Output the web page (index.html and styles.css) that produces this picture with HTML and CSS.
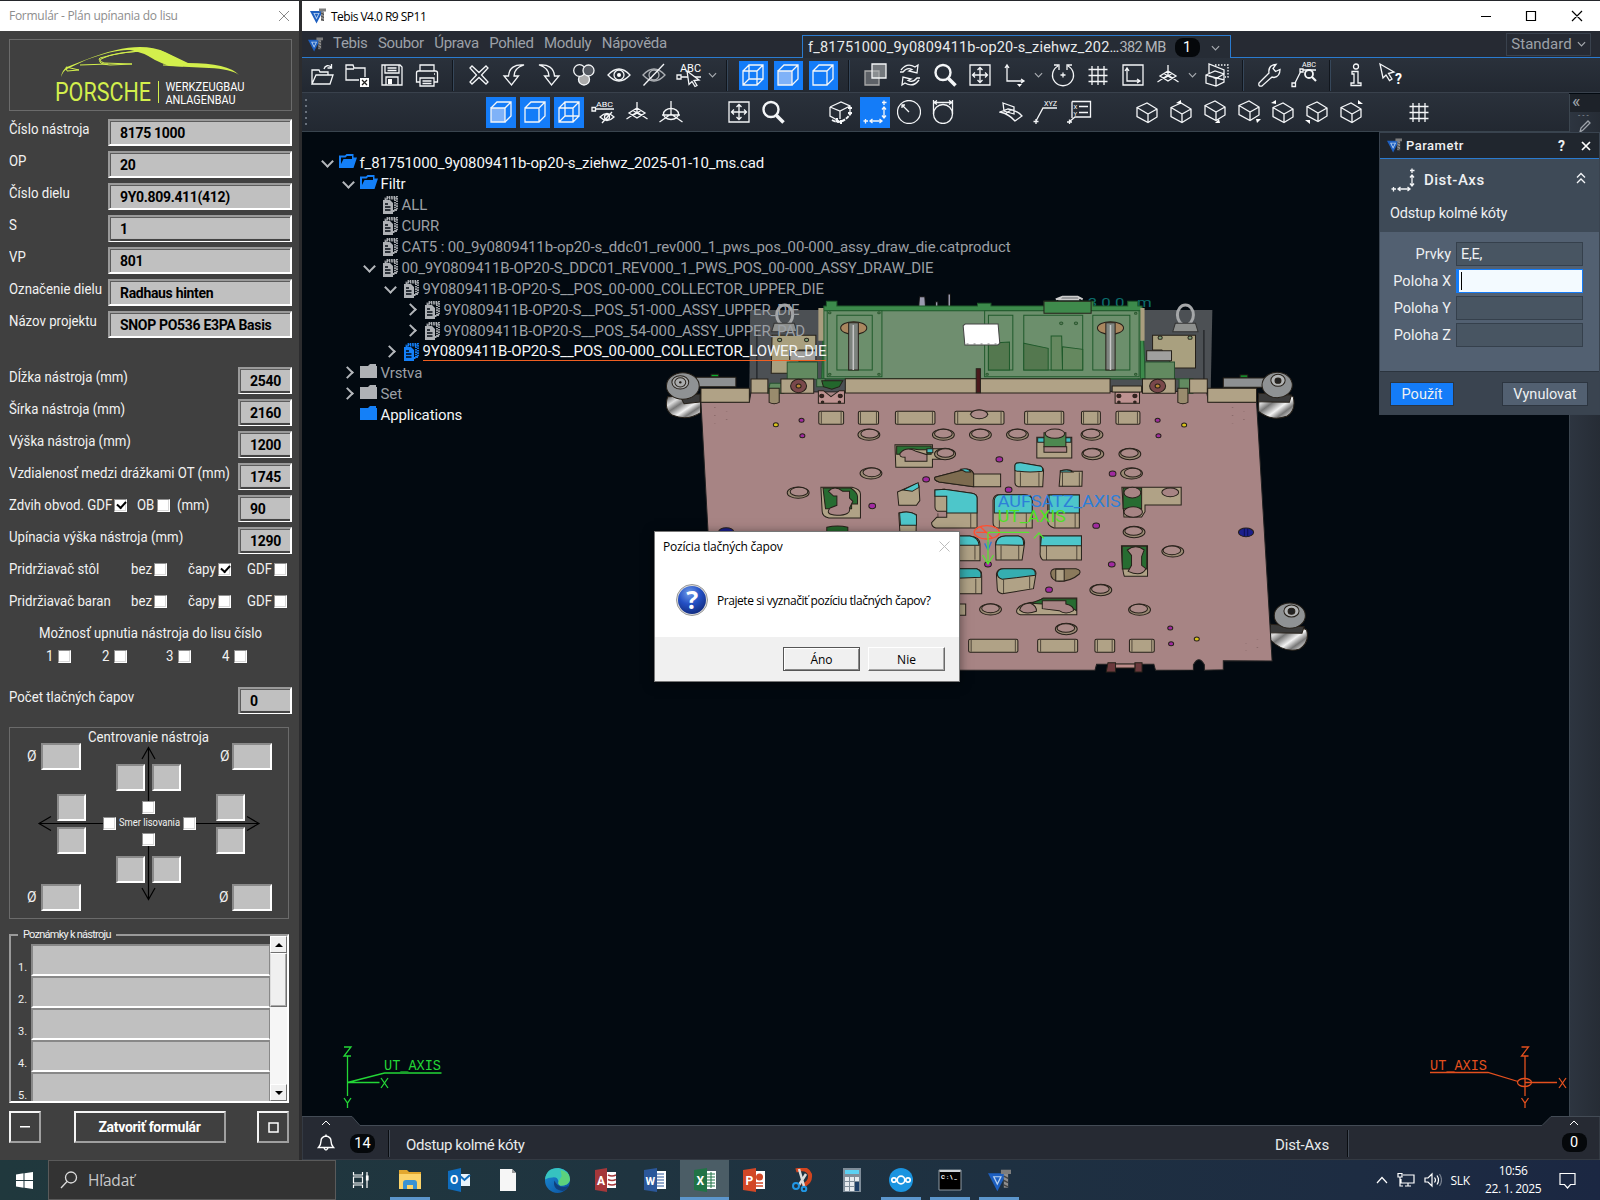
FILE: index.html
```html
<!DOCTYPE html>
<html lang="sk">
<head>
<meta charset="utf-8">
<title>Tebis V4.0 R9 SP11</title>
<link rel="stylesheet" href="styles.css">
</head>
<body>
<svg class="defs" width="0" height="0">
  <defs>
    <linearGradient id="chrome" x1="0" y1="0" x2="1" y2="1"><stop offset="0" stop-color="#444"/><stop offset=".25" stop-color="#ddd"/><stop offset=".4" stop-color="#777"/><stop offset=".6" stop-color="#f2f2f2"/><stop offset=".75" stop-color="#777"/><stop offset=".88" stop-color="#ccc"/><stop offset="1" stop-color="#444"/></linearGradient>
    <linearGradient id="edge" x1="0" y1="0" x2="1" y2="1"><stop offset="0" stop-color="#1b8fd6"/><stop offset="1" stop-color="#0c4f9e"/></linearGradient>
    <radialGradient id="ask" cx=".4" cy=".25" r=".8"><stop offset="0" stop-color="#6f9be8"/><stop offset=".5" stop-color="#2450c4"/><stop offset="1" stop-color="#122b7c"/></radialGradient>
  </defs>
  <symbol id="tebis" viewBox="0 0 16 16"><path d="M0 3h13L6.500 15.500z" fill="#1d5fc0"/><path d="M3.300 5h6.400L6.500 11.500z" fill="#b9d2f0"/><path d="M4.700 5.800h3.600L6.500 9.500z" fill="#1d5fc0"/><path d="M9 .5h7v3H9z" fill="#7d7d7d"/><path d="M11 3.500h3V13h-3z" fill="#8f8f8f"/><path d="M11 5l3 1.500M11 8l3 1.500M11 11l3 1.500" stroke="#444"/></symbol>
  <symbol id="open" viewBox="0 0 24 24"><path d="M2 21V7h7l1 2h8v3M2 21l4-9h17l-3 9zM14 6c1-4 5-4 7-2M21.500 1v4h-4"/></symbol>
  <symbol id="folderx" viewBox="0 0 24 24"><path d="M14 17H1V2h7l1 3h11v9M1 6h8"/><path class="solid" d="M15 15h9v9h-9z"/><path d="M17 17l5 5m0-5l-5 5" stroke="#222"/></symbol>
  <symbol id="save" viewBox="0 0 24 24"><path d="M2 2h18l2 2v18H2zM5 2v8h14V2M7.500 5h9M7.500 7.500h9M6 22v-8h12v8"/><path class="solid" d="M8 16h4v5H8z"/></symbol>
  <symbol id="print" viewBox="0 0 24 24"><path d="M5 8V2h14v6M5 19H1.500V10q0-2 2-2h17q2 0 2 2v9H19M5 15h14v8H5zM7.500 18h9M7.500 20.500h9M19 11h1"/></symbol>
  <symbol id="cross" viewBox="0 0 24 24"><path d="M3 5l2-2 7 6.500L19 3l2 2-6.500 7L21 19l-2 2-7-6.500L5 21l-2-2 6.500-7z"/></symbol>
  <symbol id="undo" viewBox="0 0 24 24"><path d="M22 2C13 1 7 5 6.500 13H2l7.500 9 7-9h-4.500C12 8 15 4 22 2z"/></symbol>
  <symbol id="redo" viewBox="0 0 24 24"><path d="M2 2c9-1 15 3 15.500 11H22l-7.500 9-7-9H12C12 8 9 4 2 2z"/></symbol>
  <symbol id="rgb" viewBox="0 0 24 24"><circle cx="12" cy="16.500" r="5.500" fill="#aaa"/><circle cx="7.500" cy="7.500" r="5.800" fill="#262c35"/><circle cx="16.500" cy="7.500" r="5.500" fill="#555a62"/></symbol>
  <symbol id="eye" viewBox="0 0 24 24"><path d="M1 12Q12 0 23 12Q12 24 1 12z"/><circle cx="12" cy="12" r="5"/><circle class="solid" cx="12" cy="12" r="2"/></symbol>
  <symbol id="eyeoff" viewBox="0 0 24 24"><g opacity=".65"><path d="M1 12Q12 0 23 12Q12 24 1 12z"/><circle cx="12" cy="12" r="5"/></g><path d="M1.500 22.500L22 1"/></symbol>
  <symbol id="wire" viewBox="0 0 24 24"><path d="M2 8h14v14H2zM8 2h14v14H8zM2 8l6-6M16 8l6-6M16 22l6-6M2 22l6-6"/></symbol>
  <symbol id="shade" viewBox="0 0 24 24"><path d="M2 8h14v14H2z" fill="#7fb2f8"/><path d="M2 8l6-6h14v14l-6 6M16 8l6-6"/></symbol>
  <symbol id="hidden" viewBox="0 0 24 24"><path d="M2 8h14v14H2zM2 8l6-6h14v14l-6 6M16 8l6-6"/></symbol>
  <symbol id="overlap" viewBox="0 0 24 24"><path d="M2 8h14v14H2z" fill="#5d6167" stroke="#aaa"/><path d="M9 1h14v14H9z" fill="#a9abae" fill-opacity=".6"/></symbol>
  <symbol id="refresh" viewBox="0 0 24 24"><path d="M3 7q6-8 14-3l3-2-1 8-8-2 3-1.500Q9 4 5 9H2M21 17q-6 8-14 3l-3 2 1-8 8 2-3 1.500q5 2.500 9-2.500h3"/></symbol>
  <symbol id="mag" viewBox="0 0 24 24"><circle cx="10" cy="9.500" r="7.500" stroke-width="2.400"/><path d="M15.500 15.500l7 7" stroke-width="3.500"/></symbol>
  <symbol id="fit" viewBox="0 0 24 24"><path d="M2 2h20v20H2zM12 5v14M5 12h14M9.500 7L12 4.500 14.500 7M9.500 17l2.500 2.500 2.500-2.500M7 9.500L4.500 12 7 14.500M17 9.500l2.500 2.500-2.500 2.500"/></symbol>
  <symbol id="axes" viewBox="0 0 24 24"><path d="M4 3v15h17M2 5l2-3 2 3M18 16l3 2-3 2"/><path class="solid" d="M14 21h5l-2.500 3z"/></symbol>
  <symbol id="rotate" viewBox="0 0 24 24"><path d="M7 3a10.500 10.500 0 1 0 10 0M3 2h5v5M21 2h-5v5M12 9.500v5M9.500 12h5"/></symbol>
  <symbol id="grid" viewBox="0 0 24 24"><path d="M6 3v19M12 3v19M18 3v19M2.500 6.500h19M2.500 12.500h19M2.500 18.500h19"/></symbol>
  <symbol id="axbox" viewBox="0 0 24 24"><path d="M2 2h20v20H2zM6 6v12h13M4 8l2-3 2 3M16 16l3 2-3 2"/></symbol>
  <symbol id="tri" viewBox="0 0 24 24"><path d="M12 2v10M12 12L1.500 19M12 12l10.500 7M12 8l8 5-8 5-8-5zM8 10.500l8 5M16 10.500l-8 5"/></symbol>
  <symbol id="tri2" viewBox="0 0 24 24"><path d="M12 1v13M12 14L.5 22M12 14l11.500 8M3 15h18"/><ellipse cx="12" cy="14" rx="7.500" ry="5.500"/></symbol>
  <symbol id="section" viewBox="0 0 24 24"><path d="M1 12l9-4 9 3v8l-8 4-10-3zM1 12l10 3.500 8-4.500M11 15.500V23M4 10.500V1l15 6v10L4 13"/><path d="M10 2h13v12h-3" stroke-dasharray="1.500 1.500"/></symbol>
  <symbol id="wrench" viewBox="0 0 24 24"><path d="M2 20L12 10q-1-6 4-8l3-.5-3 4 2.500 3 4.500-2q0 7-6 8l-2-.5L5 23q-4 1-3-3z"/></symbol>
  <symbol id="info" viewBox="0 0 24 24"><circle cx="12" cy="3.500" r="2.500"/><path d="M8 8.500h6V20h3v2.500H7V20h3v-9H8z"/></symbol>
  <symbol id="boxdim" viewBox="0 0 24 24"><path d="M1 7l11-5 9 4v8M1 7v9l9 5M1 7l10 4 10-5M11 11v8"/><path d="M3 20q10 6 19-7M19 8h4M19 13h4M12 20v4M8 18v5" stroke-width="2" stroke-dasharray="4 1"/></symbol>
  <symbol id="dist" viewBox="0 0 24 24"><path d="M21 .5v4.500M19 2.500h4.500M21 7v11M19 9.500L21 7l2 2.500M19 15.500l2 2.500 2-2.500M.5 21h4.500M2.500 19v4.500M7 21h12M9.500 19L7 21l2.500 2M16.500 19l2.500 2-2.500 2"/></symbol>
  <symbol id="circ" viewBox="0 0 24 24"><circle cx="12" cy="12" r="11.500"/><path d="M12 12L5 5M8 5H5v3"/></symbol>
  <symbol id="circdim" viewBox="0 0 24 24"><circle cx="12" cy="14" r="9.500"/><path d="M2.500 0v14M21.500 0v14M3 2.500h18M6 .5L3 2.500l3 2M18 .5l3 2-3 2"/></symbol>
  <symbol id="surf" viewBox="0 0 24 24"><path d="M1 12l8-3q9 1 14 7l-7 5Q10 14 1 12zM4 3l11 4v7L5 11zM12 10l-6 4"/></symbol>
  <symbol id="cube" viewBox="0 0 24 24"><path d="M2 7.500l10-4.500 10 6v8l-9 5.500-11-6zM2 7.500l11 6.500 9-5M13 14v8.500"/></symbol>
  <symbol id="chev" viewBox="0 0 10 10"><path d="M1 3l4 4 4-4"/></symbol>
  <symbol id="fopen" viewBox="0 0 18 14"><path d="M0 14V1.500h6L7.500 0h7v3.500H18L14.500 14zM2 10l2.500-5H13V2H8L6.500 3.500H2z"/></symbol>
  <symbol id="fclosed" viewBox="0 0 18 14"><path d="M0 2h8l2-2h6v2h1v12H0z"/></symbol>
  <symbol id="docs" viewBox="0 0 16 18"><path d="M5.500 2V.8H15V14h-2M3.500 4V2.500H13V15h-2" fill="none" stroke="currentColor" stroke-dasharray="1.600 .8" stroke-width="1.800"/><path d="M1 4h7l3 3v11H1z"/><path d="M3 8h3M3 11h5.500M3 14h5.500" stroke="#020910" stroke-width="1.300"/></symbol>
</svg>

<div class="desktop">
  <div class="windows">
    <aside class="form">
      <header class="form-title"><span>Formulár - Plán upínania do lisu</span><svg width="12" height="12" viewBox="0 0 12 12"><path d="M1 1l10 10M11 1L1 11"/></svg></header>
      <div class="form-body">
        <div class="logo">
          <svg width="281" height="69" viewBox="10 40 281 69">
            <path d="M61 77q1-7 6-10l18-7q33-13 55-13 14 0 25 5l23 11q40 0 51 12-8-6-30-7l-40-2q-8-3-14-6-12-8-25-10-15-1-44 10l-19 9q-4 2-6 8z" fill="#d3ef4c"/>
            <path d="M160 50l26 13-8 1-18-10z" fill="#d3ef4c"/>
            <path d="M153 51q-25-1-53 7-3 2 4 5l28 1-22 1q-14-1-9-6 14-8 52-8zM80 65l28-1M66 67l13 3-12 1zM163 60q6-2 10 3M163 65l20 1" fill="none" stroke="#d3ef4c"/>
            <text x="55" y="101" class="brand" textLength="96" lengthAdjust="spacingAndGlyphs">PORSCHE</text>
            <path d="M158.500 81v22" stroke="#d3ef4c"/>
            <text x="165.500" y="91" class="sub" textLength="79" lengthAdjust="spacingAndGlyphs">WERKZEUGBAU</text>
            <text x="165.500" y="104" class="sub" textLength="70" lengthAdjust="spacingAndGlyphs">ANLAGENBAU</text>
          </svg>
        </div>
        <div class="rows ident">
          <label class="row"><span class="lb">Číslo nástroja</span><span class="field">8175 1000</span></label>
          <label class="row"><span class="lb">OP</span><span class="field">20</span></label>
          <label class="row"><span class="lb">Číslo dielu</span><span class="field">9Y0.809.411(412)</span></label>
          <label class="row"><span class="lb">S</span><span class="field line">1</span></label>
          <label class="row"><span class="lb">VP</span><span class="field">801</span></label>
          <label class="row"><span class="lb">Označenie dielu</span><span class="field">Radhaus hinten</span></label>
          <label class="row"><span class="lb">Názov projektu</span><span class="field">SNOP PO536 E3PA Basis</span></label>
        </div>
        <div class="rows dims">
          <label class="row"><span class="lb">Dĺžka nástroja (mm)</span><span class="field line">2540</span></label>
          <label class="row"><span class="lb">Šírka nástroja (mm)</span><span class="field line">2160</span></label>
          <label class="row"><span class="lb">Výška nástroja (mm)</span><span class="field line">1200</span></label>
          <label class="row"><span class="lb">Vzdialenosť medzi drážkami OT (mm)</span><span class="field line">1745</span></label>
          <div class="row"><span class="stroke-grid"><span class="lb">Zdvih obvod. GDF</span><i class="ck on"></i><span class="lb">OB</span><i class="ck"></i><span class="lb">(mm)</span></span><span class="field line">90</span></div>
          <label class="row"><span class="lb">Upínacia výška nástroja (mm)</span><span class="field line">1290</span></label>
          <div class="hold"><span class="lb">Pridržiavač stôl</span><span class="lb">bez</span><i class="ck"></i><span class="lb">čapy</span><i class="ck on"></i><span class="lb">GDF</span><i class="ck"></i></div>
          <div class="hold"><span class="lb">Pridržiavač baran</span><span class="lb">bez</span><i class="ck"></i><span class="lb">čapy</span><i class="ck"></i><span class="lb">GDF</span><i class="ck"></i></div>
        </div>
        <div class="press">
          <span class="lb">Možnosť upnutia nástroja do lisu číslo</span>
          <div class="press-opts"><span class="lb">1</span><i class="ck"></i><span class="lb">2</span><i class="ck"></i><span class="lb">3</span><i class="ck"></i><span class="lb">4</span><i class="ck"></i></div>
        </div>
        <div class="rows dims pins"><label class="row"><span class="lb">Počet tlačných čapov</span><span class="field line">0</span></label></div>
        <div class="center-box">
          <svg width="278" height="190" viewBox="10 728 278 190">
            <g class="arrows"><path d="M148.500 748v56M142 759l6.500-11.500L155 759M148.500 842v57M142 888l6.500 11.500L155 888M40 823.500h66M51 816.500l-12 7 12 7M192 823.500h66M247 816.500l12 7-12 7"/></g>
            <g class="lbt"><text x="88" y="741.500" font-size="15" textLength="121" lengthAdjust="spacingAndGlyphs">Centrovanie nástroja</text>
            <text x="27" y="761" textLength="9.500" lengthAdjust="spacingAndGlyphs">Ø</text><text x="220" y="761" textLength="9.500" lengthAdjust="spacingAndGlyphs">Ø</text><text x="27" y="902" textLength="9.500" lengthAdjust="spacingAndGlyphs">Ø</text><text x="219" y="902" textLength="9.500" lengthAdjust="spacingAndGlyphs">Ø</text>
            <text x="119" y="826" class="tiny" textLength="61" lengthAdjust="spacingAndGlyphs">Smer lisovania</text></g>
          </svg>
          <i class="nb w" style="left:31px;top:15px"></i><i class="nb w" style="left:222px;top:15px"></i><i class="nb w" style="left:31px;top:156px"></i><i class="nb w" style="left:222px;top:156px"></i>
          <i class="nb" style="left:106px;top:36px"></i><i class="nb" style="left:142px;top:36px"></i><i class="nb" style="left:106px;top:128px"></i><i class="nb" style="left:142px;top:128px"></i>
          <i class="nb" style="left:47px;top:66px"></i><i class="nb" style="left:47px;top:99px"></i><i class="nb" style="left:206px;top:66px"></i><i class="nb" style="left:206px;top:99px"></i>
          <i class="ck" style="left:132px;top:73px"></i><i class="ck" style="left:132px;top:105px"></i><i class="ck" style="left:93px;top:89px"></i><i class="ck" style="left:173px;top:89px"></i>
        </div>
        <div class="notes">
          <span class="legend">Poznámky k nástroju</span>
          <div class="note-list">
            <div class="note"><b>1.</b><i></i></div><div class="note"><b>2.</b><i></i></div><div class="note"><b>3.</b><i></i></div><div class="note"><b>4.</b><i></i></div><div class="note"><b>5.</b><i></i></div>
          </div>
          <div class="sb"><div class="sb-btn"><svg width="8" height="4"><path d="M0 4l4-4 4 4z"/></svg></div><div class="sb-thumb"></div><div class="sb-space"></div><div class="sb-btn"><svg width="8" height="4"><path d="M0 0l4 4 4-4z"/></svg></div></div>
        </div>
        <div class="form-foot"><button class="sq"><svg width="10" height="2"><path d="M0 0h10v1.500H0z" fill="#fff"/></svg></button><button class="close-form">Zatvoriť formulár</button><button class="sq"><svg width="11" height="11"><path d="M1 1h9v9H1z" fill="none" stroke="#fff" stroke-width="1.500"/></svg></button></div>
      </div>
    </aside>

    <main class="app">
      <header class="app-title"><svg width="16" height="16"><use href="#tebis"/></svg><span>Tebis V4.0 R9 SP11</span>
        <svg class="winbtns" width="104" height="12" viewBox="0 0 104 12"><path d="M0 6.500h10M45.500 1.500h9v9h-9zM91 1l10 10M101 1L91 11"/></svg></header>
      <nav class="menubar">
        <svg class="mlogo" width="15" height="15"><use href="#tebis"/></svg>
        <div class="menus"><span>Tebis</span><span>Soubor</span><span>Úprava</span><span>Pohled</span><span>Moduly</span><span>Nápověda</span></div>
        <div class="tab"><span class="tabname">f_81751000_9y0809411b-op20-s_ziehwz_202…</span><span class="mb">382 MB</span><span class="badge">1</span><svg class="ic small" width="10" height="10"><use href="#chev"/></svg></div>
        <div class="layout-sel"><span>Standard</span><svg class="ic small" width="10" height="10"><use href="#chev"/></svg></div>
      </nav>
      <div class="tools t1">
        <span><svg class="ic"><use href="#open"/></svg></span><span><svg class="ic"><use href="#folderx"/></svg></span><span><svg class="ic"><use href="#save"/></svg></span><span><svg class="ic"><use href="#print"/></svg></span><hr>
        <span><svg class="ic"><use href="#cross"/></svg></span><span><svg class="ic"><use href="#undo"/></svg></span><span><svg class="ic"><use href="#redo"/></svg></span><span><svg class="ic"><use href="#rgb"/></svg></span><span><svg class="ic"><use href="#eye"/></svg></span><span><svg class="ic"><use href="#eyeoff"/></svg></span>
        <span><svg class="ic" viewBox="0 0 24 24"><text x="3" y="9" font-size="10" textLength="21" lengthAdjust="spacingAndGlyphs">ABC</text><path d="M0 12h4v4H0zM4 14h20"/><path d="M10 8l12 9-5 .5 3 5-2 1-3-5-3 3z" fill="#262c35"/></svg></span><em><svg class="ic small"><use href="#chev"/></svg></em><hr>
        <span class="on"><svg class="ic"><use href="#wire"/></svg></span><span class="on"><svg class="ic"><use href="#shade"/></svg></span><span class="on"><svg class="ic"><use href="#hidden"/></svg></span><hr>
        <span><svg class="ic"><use href="#overlap"/></svg></span><span><svg class="ic"><use href="#refresh"/></svg></span><span><svg class="ic"><use href="#mag"/></svg></span><span><svg class="ic"><use href="#fit"/></svg></span><span><svg class="ic"><use href="#axes"/></svg></span><em><svg class="ic small"><use href="#chev"/></svg></em>
        <span><svg class="ic"><use href="#rotate"/></svg></span><span><svg class="ic"><use href="#grid"/></svg></span><span><svg class="ic"><use href="#axbox"/></svg></span><span><svg class="ic"><use href="#tri"/></svg></span><em class="wide"><svg class="ic small"><use href="#chev"/></svg></em><span><svg class="ic"><use href="#section"/></svg></span><hr>
        <span><svg class="ic"><use href="#wrench"/></svg></span>
        <span><svg class="ic" viewBox="0 0 24 24"><text x="10" y="4" font-size="7" textLength="14" lengthAdjust="spacingAndGlyphs">ABC</text><path d="M0 20h3.500v3.500H0zM3 20L9 8M8 6h3v3H8zM11 7h13"/><circle cx="17" cy="11" r="4" stroke-width="1.800"/><path d="M20 14l4 4" stroke-width="2.200"/></svg></span><hr>
        <span><svg class="ic"><use href="#info"/></svg></span>
        <span><svg class="ic" viewBox="0 0 24 24"><path d="M1 1l14 8-5.500 1.500L13 16l-2.500 1.500L7 12l-3 3z"/><text x="16" y="21" font-size="14" font-weight="700">?</text></svg></span>
      </div>
      <div class="tools t2">
        <b class="grip"></b>
        <span class="on"><svg class="ic"><use href="#shade"/></svg></span><span class="on"><svg class="ic"><use href="#hidden"/></svg></span><span class="on"><svg class="ic"><use href="#wire"/></svg></span>
        <span><svg class="ic" viewBox="0 0 24 24"><text x="5" y="6.500" font-size="8" textLength="17" lengthAdjust="spacingAndGlyphs">ABC</text><path d="M1 7.500h3.500V11H1zM4.500 9H23"/><path d="M9 17q7-7 14 0-7 7-14 0zM11 23L21 12"/><circle cx="16" cy="17" r="2.500"/></svg></span>
        <span><svg class="ic"><use href="#tri"/></svg></span><span><svg class="ic"><use href="#tri2"/></svg></span><span></span>
        <span><svg class="ic"><use href="#fit"/></svg></span><span><svg class="ic"><use href="#mag"/></svg></span><span></span>
        <span><svg class="ic"><use href="#boxdim"/></svg></span><span class="on"><svg class="ic"><use href="#dist"/></svg></span><span><svg class="ic"><use href="#circ"/></svg></span><span><svg class="ic"><use href="#circdim"/></svg></span><span></span>
        <span><svg class="ic"><use href="#surf"/></svg></span>
        <span><svg class="ic" viewBox="0 0 24 24"><text x="11" y="5.500" font-size="7" textLength="13" lengthAdjust="spacingAndGlyphs">XYZ</text><path d="M24 8H10L3 21M.5 21.500h5M3 19v5"/></svg></span>
        <span><svg class="ic" viewBox="0 0 24 24"><path d="M5 1.500h18.500V17H8l-6 5M0 22h5M2.500 19.500v4.500M5 1.500V18M12 6.500h9M12 12.500h9"/><text x="6.500" y="8.500" font-size="6">X</text><text x="6.500" y="15.500" font-size="6">Y</text></svg></span><span></span>
        <span><svg class="ic" viewBox="0 0 24 24"><use href="#cube"/></svg></span>
        <span><svg class="ic" viewBox="0 0 24 24"><use href="#cube"/><path class="solid" d="M7 3l5-3v4z"/></svg></span>
        <span><svg class="ic" viewBox="0 0 24 24"><use href="#cube" y="-2"/><path class="solid" d="M12 23l4-4 1 4z"/></svg></span>
        <span><svg class="ic" viewBox="0 0 24 24"><use href="#cube" y="-2"/><path class="solid" d="M19 19h5l-4 4z"/></svg></span>
        <span><svg class="ic" viewBox="0 0 24 24"><use href="#cube"/><path class="solid" d="M0 3l5-3v4z"/></svg></span>
        <span><svg class="ic" viewBox="0 0 24 24"><use href="#cube" y="-1"/><path class="solid" d="M0 20h5v4z"/></svg></span>
        <span><svg class="ic" viewBox="0 0 24 24"><use href="#cube"/><path class="solid" d="M19 0l5 4h-5z"/></svg></span><span></span>
        <span><svg class="ic"><use href="#grid"/></svg></span>
      </div>
      <div class="work">
        <section class="viewport">
          <svg class="scene" width="1267" height="995" viewBox="302 132 1267 995">
            <svg x="650" y="280" width="660" height="400" viewBox="0 0 1568 1200" preserveAspectRatio="none" class="model">
              <text x="1040" y="82" fill="#0c6d6b" font-size="40" textLength="152" lengthAdjust="spacing">300 m</text>
              <!-- glass press frame -->
              <path d="M238 90H1336L1332 340H236z" fill="#4c5054" stroke="none"/>
              <path d="M254 150V300M1316 150V300" stroke="#15181b"/>
              <g stroke="#111"><path d="M638 90l2-40h13l2 40zM678 80V65h6v15M708 80V42h6v38" fill="#9a9aae"/></g>
              <g fill="none" stroke="#a5a7a9" stroke-width="3"><ellipse cx="320" cy="105" rx="19" ry="30"/><ellipse cx="1272" cy="105" rx="19" ry="30"/></g>
              <path d="M295 130h48l6 25h-60zM1248 130h48l6 25h-60z" fill="#8d8f8d" stroke="#333"/>
              <!-- swivel rings -->
              <path d="M42 350q-10 40 12 56 34 18 66-8V345z" fill="url(#chrome)"/><path d="M70 345l49-3v24l-38 5z" fill="#3a3a3a"/><path d="M110 292h94v28h-94z" fill="#8d9092"/><ellipse cx="78" cy="318" rx="39" ry="40" fill="#8f9294"/><ellipse cx="72" cy="307" rx="20" ry="20" fill="#a9abac"/><ellipse cx="72" cy="307" rx="13" ry="14" fill="none"/><circle cx="72" cy="307" r="2"/><path d="M145 290v-7h18v7z" fill="#0cab30"/>
              <path d="M1362 294h98v28h-98z" fill="#8d9092"/><path d="M1446 350q30-30 82 0 8 40-14 58-36 18-68-14z" fill="url(#chrome)"/><path d="M1446 340l78 5-5 22-74-2z" fill="#3a3a3a"/><ellipse cx="1490" cy="315" rx="36" ry="38" fill="#8f9294"/><ellipse cx="1492" cy="301" rx="17" ry="18" fill="#b1b3b4"/><ellipse cx="1492" cy="302" rx="7" ry="8" fill="#222"/><path d="M1402 292v-7h18v7z" fill="#0cab30"/>
              <path d="M1474 1045q40-30 86 5 8 38-18 58-36 12-68-28z" fill="url(#chrome)"/><path d="M1474 1033l80 7-5 20-75-2z" fill="#3a3a3a"/><ellipse cx="1520" cy="1007" rx="37" ry="38" fill="#8f9294"/><ellipse cx="1524" cy="993" rx="18" ry="18" fill="#b1b3b4"/><ellipse cx="1524" cy="994" rx="8" ry="9" fill="#222"/>
              <!-- lower plate -->
              <path d="M121 367l115-1 4-30 1082-2 5 32 114 1 37 776-116-1v27l-45 2v-17q-13-30-26 0v16l-90 1-4-18h-136l-4 18H156z" fill="#a78484" stroke="#222"/>
              <path d="M1088 1148h18v28h-22zM1152 1148h17v28h-17z" fill="#6b393c"/><path d="M1106 1152h46v12h-46z" fill="#bd8d8b"/>
              <!-- upper structure -->
              <g stroke="#1f5a2b"><path d="M413 78h6V64h25v14h334v-8h32v8h126V64h117v14h82V64h24v14h10l8 218H408z" fill="#3c8a4b"/>
              <path d="M413 92h752v204H413z" fill="#6f8e6f"/>
              <path d="M421 92h130v198H421zM444 106h84v164h-84zM795 92h367v198H795zM804 106h58v164h-58zM888 106h140v164H888zM1052 106h88v164h-88z" fill="#6c8f6c"/>
              <path d="M888 190l58 15v65h-58zM804 190l50-4v84h-50z" fill="#54784f"/><path d="M953 168h25l2 102h-27zM980 200l48 8v62h-48z" fill="#65885f"/></g>
              <g fill="#5b7a5b" stroke="#2c5a30"><circle cx="977" cy="130" r="4"/><circle cx="1012" cy="130" r="4"/><circle cx="427" cy="98" r="3"/><circle cx="544" cy="98" r="3"/><circle cx="427" cy="283" r="3"/><circle cx="544" cy="283" r="3"/><circle cx="801" cy="283" r="3"/><circle cx="1154" cy="283" r="3"/><circle cx="1154" cy="100" r="3"/></g>
              <path d="M400 84h12v98h-12zM1165 84h10v98h-10z" fill="#a99d7e" stroke="none"/>
              <path d="M936 64h112v36H936z" fill="#3f8a4c"/><path d="M964 58l16-8h36l12 8M970 58h50" stroke="#ccc" fill="none" stroke-width="2"/>
              <g fill="#a9875f"><ellipse cx="484" cy="144" rx="31" ry="19"/><ellipse cx="1094" cy="144" rx="31" ry="19"/></g><path d="M472 128h23v142h-23zM1083 128h22v142h-22z" fill="#7d837e"/><path d="M483 135v135M1094 135v135" stroke="#c7c7c7" stroke-width="1.500"/>
              <path d="M744 137l5-5h78l4 58-5 5h-78z" fill="#fff" stroke="#444"/><path d="M752 192h72" stroke="#777" stroke-dasharray="2 5" fill="none"/>
              <path d="M290 166h104v44h-40v70h-66zM1194 166h102v98h-50l-30-54h-22z" fill="#a9a07f"/><g fill="#7fa07a"><circle cx="308" cy="180" r="5"/><circle cx="372" cy="180" r="5"/><circle cx="1212" cy="173" r="5"/><circle cx="1283" cy="173" r="5"/></g>
              <path d="M332 212h62v30h-62zM1180 212h59v30h-59z" fill="#a0a09e"/><path d="M326 246h72v50h18v24h-20v-22h-78v42h-38l5-30h41zM1176 246h70v50h44v44h-33v-42h-97v-2h16z" fill="#628a60" stroke="#275030"/>
              <path d="M240 297h40v42h-40zM311 297h78v43h-78zM464 296h629v43H464zM1170 297h78v43h-78zM1282 297h42v42h-42zM121 325h115v42H121zM1325 325h116v42h-116z" fill="#b0a286"/>
              <path d="M283 325h24v42q-12 8-24 0zM1254 325h24v42q-12 8-24 0z" fill="#998b6d"/>
              <path d="M775 266h10v72h-10z" fill="#4b191c"/>
              <g fill="#79484b"><ellipse cx="353" cy="318" rx="19" ry="20"/><ellipse cx="1206" cy="318" rx="19" ry="20"/></g><g fill="#b88735"><circle cx="353" cy="318" r="6"/><circle cx="1206" cy="318" r="6"/></g>
              <path d="M408 302h50l-8 18-18 8-20-8z" fill="#23672c"/><path d="M400 332h12l18 18 20-18h12v38h-62zM1105 336h58v34h-58z" fill="#be9291"/><path d="M1098 318h70v18h-70z" fill="#b0a286"/><g fill="#3b2020"><circle cx="408" cy="348" r="5"/><circle cx="452" cy="348" r="5"/><circle cx="410" cy="366" r="3"/><circle cx="450" cy="366" r="3"/><circle cx="1114" cy="348" r="5"/><circle cx="1152" cy="348" r="5"/><circle cx="1114" cy="366" r="3"/><circle cx="1152" cy="366" r="3"/></g>
              <!-- rectangular slots -->
              <g fill="#b0a286"><rect x="401" y="394" width="59" height="39" rx="4"/><rect x="495" y="394" width="48" height="39" rx="4"/><rect x="583" y="394" width="94" height="39" rx="4"/><rect x="724" y="394" width="117" height="39" rx="4"/><rect x="890" y="394" width="93" height="39" rx="4"/><rect x="1025" y="394" width="45" height="39" rx="4"/><rect x="1107" y="394" width="57" height="39" rx="4"/><rect x="757" y="1078" width="117" height="39" rx="4"/><rect x="921" y="1078" width="95" height="39" rx="4"/><rect x="1057" y="1078" width="47" height="39" rx="4"/><rect x="1139" y="1078" width="59" height="39" rx="4"/></g>
              <path d="M407 396v35M454 396v35M500 396v35M538 396v35M589 396v35M671 396v35M731 396v35M834 396v35M897 396v35M977 396v35M1030 396v35M1064 396v35M1113 396v35M1158 396v35M763 1080v35M868 1080v35M928 1080v35M1009 1080v35M1063 1080v35M1098 1080v35M1145 1080v35M1192 1080v35" stroke-width=".7"/>
              <path d="M762 402q20-24 40 0z" fill="#4d8850"/>
              <!-- irregular pockets -->
              <path d="M582 494h89v12h25v32h-25v24h-87z" fill="#b0a286"/><path d="M586 498h82v25h-10v-14h-20l-16-3-20 5-8 12h-8z" fill="#2a7134"/><path d="M594 520q15-22 38-6l26 10v20h-52v-12q-15 0-12-12z" fill="#a78484"/><path d="M658 506h14v12h-14z" fill="#3fbcc0"/>
              <path d="M919 472h83v62h-83z" fill="#b0a286"/><path d="M921 473h79v14h-79z" fill="#3fbcc0"/><path d="M936 458h52v42h-52z" fill="#4d8850"/><path d="M936 500h54v17h-54z" fill="#a78484"/>
              <path d="M677 592l66-22q20-8 26 12h64v38h-66l-80-14q-14-6-10-14z" fill="#b0a286"/><path d="M677 592l66-22q20-8 26 12v38l-82-14q-14-6-10-14z" fill="#7d6b4f"/><path d="M738 568q18-6 24 8h-12z" fill="#3fbcc0"/>
              <path d="M867 575v-18q0-10 14-9l48 11q6 5 6 12l-2 49h-58q-8-3-8-12z" fill="#b0a286"/><path d="M867 570v-13q0-10 14-9l48 11q6 5 3 15-30 4-55 0-10 0-10-4z" fill="#4dc6ca"/><path d="M880 577v42M924 577v42" stroke-width=".7"/>
              <path d="M975 572q22-6 30 2h22l-1 45h-54z" fill="#b0a286"/><path d="M975 572q22-6 30 4h-30z" fill="#4dc6ca"/><path d="M980 577v42M1020 577v42" stroke-width=".7"/>
              <path d="M588 636l43-24q8-2 8 6l2 44-8 14h-42z" fill="#b0a286"/><path d="M601 630l36-22 2 14-16 12z" fill="#4dc6ca"/>
              <path d="M677 630l22-2 66 12q12 3 12 14v90h-98q-10-4-10-16l12-16h24v-18h-22q-6-4-6-14z" fill="#b0a286"/><path d="M677 630l22-2 66 12q12 3 12 14v45h-72v-50h-28z" fill="#4dc6ca"/><path d="M762 700v43M684 700v14" stroke-width=".7"/>
              <path d="M815 660q2-16 14-16h60q20 0 19 18v82h-83q-10-4-10-16z" fill="#b0a286"/><path d="M818 660q2-16 14-16h56q20 0 20 18v37h-90z" fill="#4dc6ca"/><path d="M830 700v43M894 700v43" stroke-width=".7"/>
              <path d="M945 645h75v99h-60q-15-6-15-20z" fill="#b0a286"/><path d="M948 645h72v54h-72z" fill="#4dc6ca"/><path d="M962 700v43M1010 700v43" stroke-width=".7"/>
              <path d="M591 699q24-8 42 5l-1 60h-38z" fill="#b0a286"/><path d="M593 699q24-8 40 7v30h-38z" fill="#4dc6ca"/>
              <path d="M700 768h60q24 4 24 24v50h-84z" fill="#b0a286"/><path d="M700 768h60q20 4 22 28h-82z" fill="#4dc6ca"/><path d="M821 794q2-26 24-26h30q15 4 15 20l-6 52h-62z" fill="#b0a286"/><path d="M821 794q2-26 24-26h30q15 4 12 28z" fill="#4dc6ca"/><path d="M834 797v42M876 797v42M772 797v42" stroke-width=".7"/><path d="M927 768h98v72h-92q-8-10-6-24z" fill="#b0a286"/><path d="M930 768h95v29h-97z" fill="#4dc6ca"/><path d="M942 798v42M1014 798v42" stroke-width=".7"/>
              <path d="M700 866h76q14 6 12 22v53h-88z" fill="#b0a286"/><path d="M700 866h76q14 6 10 26l-86 4z" fill="#35aeb1"/><path d="M823 882q2-16 16-16h64q14 0 14 14l-6 46-74 15q-12-2-12-16z" fill="#b0a286"/><path d="M825 880q2-14 16-14h64q12 2 10 20l-78 12q-12-4-12-18z" fill="#35aeb1"/><path d="M840 899v40M902 890v36M774 896v44" stroke-width=".7"/>
              <path d="M952 880q0-14 14-14h46q14 4 8 16-20 22-48 22-20-2-20-24z" fill="#8b7a5c"/><path d="M964 868h20v35h-20z" fill="#b0a286"/>
              <path d="M406 622h74q20 6 20 20v72h-75q-16-4-16-20z" fill="#b0a286"/><path d="M411 624h66q16 14 16 26v22h-14v14h-62z" fill="#276c31"/><path d="M424 634q14-20 34 0h16v20l8 10-8 20q4 22-30 22-30-2-16-22l16-8v-28h-8z" fill="#a78484"/>
              <path d="M1121 622h141v53h-86v20l-8 16h-42z" fill="#b0a286"/><path d="M1124 624h44v62h-44z" fill="#276c31"/><ellipse cx="1146" cy="638" rx="20" ry="16" fill="#a78484"/><ellipse cx="1148" cy="696" rx="22" ry="16" fill="#a78484"/><ellipse cx="1236" cy="637" rx="20" ry="13" fill="#a78484"/>
              <path d="M1120 797h62v92h-55q-6-20-7-92z" fill="#b0a286"/><path d="M1122 799h58v68h-58z" fill="#276c31"/><path d="M1134 810q20-20 40 0l-6 20v26l10 10q-10 26-42 8l8-18v-30z" fill="#a78484"/>
              <path d="M872 988q10-22 48-22l14-12h80v50H880q-12-4-8-16z" fill="#b0a286"/><path d="M905 970l28-14h80v36l-26-20h-54z" fill="#276c31"/><path d="M878 990q6-22 26-20 15 8 14 24-26 12-40-4zM932 962h56v10q20 6 18 20-18 14-34 0l-40-6z" fill="#a78484"/><path d="M420 756v-14q26-8 50 0v14z" fill="#23672c"/><path d="M730 972h20v34h-20z" fill="#b0a286"/>
              <!-- lightening holes -->
              <g class="hole"><ellipse cx="520" cy="464" rx="26" ry="17"/><ellipse cx="697" cy="464" rx="26" ry="17"/><ellipse cx="785" cy="464" rx="26" ry="17"/><ellipse cx="873" cy="464" rx="26" ry="17"/><ellipse cx="1050" cy="464" rx="26" ry="17"/><ellipse cx="701" cy="522" rx="25" ry="17"/><ellipse cx="1052" cy="522" rx="26" ry="17"/><ellipse cx="1140" cy="522" rx="26" ry="17"/><ellipse cx="525" cy="580" rx="26" ry="17"/><ellipse cx="1144" cy="580" rx="26" ry="17"/><ellipse cx="352" cy="638" rx="26" ry="17"/><ellipse cx="1150" cy="756" rx="26" ry="17"/><ellipse cx="1242" cy="814" rx="26" ry="17"/><ellipse cx="1071" cy="930" rx="26" ry="17"/><ellipse cx="809" cy="988" rx="26" ry="17"/><ellipse cx="1163" cy="989" rx="26" ry="17"/><ellipse cx="989" cy="1047" rx="26" ry="17"/></g>
              <g class="hole in"><ellipse cx="522" cy="461" rx="21" ry="13"/><ellipse cx="697" cy="461" rx="21" ry="13"/><ellipse cx="785" cy="461" rx="21" ry="13"/><ellipse cx="873" cy="461" rx="21" ry="13"/><ellipse cx="1048" cy="461" rx="21" ry="13"/><ellipse cx="702" cy="519" rx="20" ry="13"/><ellipse cx="1050" cy="519" rx="21" ry="13"/><ellipse cx="1139" cy="519" rx="21" ry="13"/><ellipse cx="527" cy="577" rx="21" ry="13"/><ellipse cx="1147" cy="578" rx="20" ry="13"/><ellipse cx="354" cy="635" rx="21" ry="13"/><ellipse cx="1149" cy="753" rx="21" ry="13"/><ellipse cx="1240" cy="811" rx="21" ry="13"/><ellipse cx="1070" cy="927" rx="21" ry="13"/><ellipse cx="809" cy="985" rx="21" ry="13"/><ellipse cx="1161" cy="986" rx="21" ry="13"/><ellipse cx="988" cy="1044" rx="21" ry="13"/><ellipse cx="782" cy="403" rx="20" ry="13"/><ellipse cx="962" cy="461" rx="23" ry="14"/></g>
              <g fill="#a02aa0"><circle cx="360" cy="421" r="6"/><circle cx="362" cy="467" r="6"/><circle cx="830" cy="538" r="8"/><circle cx="656" cy="598" r="8"/><circle cx="852" cy="629" r="8"/><circle cx="528" cy="678" r="8"/><circle cx="1099" cy="581" r="8"/><circle cx="1060" cy="737" r="8"/><circle cx="1097" cy="853" r="8"/><circle cx="948" cy="929" r="8"/><circle cx="803" cy="853" r="8"/><circle cx="1206" cy="421" r="6"/><circle cx="1208" cy="467" r="6"/><circle cx="1236" cy="1044" r="6"/><circle cx="1238" cy="1091" r="6"/></g>
              <g fill="#d8c21a"><circle cx="299" cy="434" r="6"/><circle cx="1269" cy="435" r="6"/><circle cx="1299" cy="1077" r="6"/></g>
              <g fill="#1b1f8c"><ellipse cx="181" cy="756" rx="18" ry="13"/><ellipse cx="1416" cy="757" rx="18" ry="13"/></g><path d="M1412 745v24M1420 745v24" stroke="#0c0f55"/>
              <path d="M154 382v1M182 393v1M154 406v1M182 418v1M154 431v1M1384 382v1M1411 393v1M1384 406v1M1411 418v1M1384 431v1M1416 1089v1M1443 1077v1M1416 1112v1M1443 1102v1" stroke="#6f5252" stroke-width="1.500"/>
              <!-- axis markers -->
              <g fill="none" stroke-width="1.300"><ellipse cx="800" cy="757" rx="30" ry="20" stroke="#ff5030"/><path d="M775 757h50M785 740l28 34" stroke="#ff5030"/><path d="M803 785v25l-8-20M803 810l8-25" stroke="#2d7ad6"/><path d="M803 757h98M803 757v95M790 825l13 27 13-27M912 775l12-16 12 16" stroke="#58e430"/></g>
              <g stroke="none" font-size="50"><text x="826" y="680" fill="#2d7fd8" textLength="292" lengthAdjust="spacingAndGlyphs">AUFSATZ_AXIS</text><text x="826" y="725" fill="#4fe025" textLength="162" lengthAdjust="spacingAndGlyphs">UT_AXIS</text></g>
            </svg>
            <g class="tri-g"><path d="M347.500 1056v40M347.500 1082.500h32M347.500 1082.500l37-9.500h57M344 1047h7l-7 9h7M344 1098l3.500 5 3.500-5M347.500 1103v5M381 1078l7 10M388 1078l-7 10"/><text x="384" y="1070" textLength="57" lengthAdjust="spacingAndGlyphs">UT_AXIS</text></g>
            <g class="tri-r"><path d="M1525 1056v40M1525 1082.500h32M1430 1072.500h58l30 9M1521.500 1047h7l-7 9h7M1521.500 1098l3.500 5 3.500-5M1525 1103v5M1559 1078l7 10M1566 1078l-7 10"/><ellipse cx="1524.500" cy="1082.500" rx="7" ry="4"/><text x="1430" y="1070" textLength="57" lengthAdjust="spacingAndGlyphs">UT_AXIS</text></g>
          </svg>

          <div class="tree">
            <div class="node hi"><i class="tw o"></i><svg class="fo"><use href="#fopen"/></svg><span>f_81751000_9y0809411b-op20-s_ziehwz_2025-01-10_ms.cad</span></div>
            <div class="node l1 hi"><i class="tw o"></i><svg class="fo"><use href="#fopen"/></svg><span>Filtr</span></div>
            <div class="node l2"><i class="tw"></i><svg class="dc"><use href="#docs"/></svg><span>ALL</span></div>
            <div class="node l2"><i class="tw"></i><svg class="dc"><use href="#docs"/></svg><span>CURR</span></div>
            <div class="node l2"><i class="tw"></i><svg class="dc"><use href="#docs"/></svg><span>CAT5 : 00_9y0809411b-op20-s_ddc01_rev000_1_pws_pos_00-000_assy_draw_die.catproduct</span></div>
            <div class="node l2"><i class="tw o"></i><svg class="dc"><use href="#docs"/></svg><span>00_9Y0809411B-OP20-S_DDC01_REV000_1_PWS_POS_00-000_ASSY_DRAW_DIE</span></div>
            <div class="node l3"><i class="tw o"></i><svg class="dc"><use href="#docs"/></svg><span>9Y0809411B-OP20-S__POS_00-000_COLLECTOR_UPPER_DIE</span></div>
            <div class="node l4"><i class="tw c"></i><svg class="dc"><use href="#docs"/></svg><span>9Y0809411B-OP20-S__POS_51-000_ASSY_UPPER_DIE</span></div>
            <div class="node l4"><i class="tw c"></i><svg class="dc"><use href="#docs"/></svg><span>9Y0809411B-OP20-S__POS_54-000_ASSY_UPPER_PAD</span></div>
            <div class="node l3 hi cur"><i class="tw c"></i><svg class="dc"><use href="#docs"/></svg><span>9Y0809411B-OP20-S__POS_00-000_COLLECTOR_LOWER_DIE</span></div>
            <div class="node l1"><i class="tw c"></i><svg class="fo"><use href="#fclosed"/></svg><span>Vrstva</span></div>
            <div class="node l1"><i class="tw c"></i><svg class="fo"><use href="#fclosed"/></svg><span>Set</span></div>
            <div class="node l1 hi"><i class="tw"></i><svg class="fo"><use href="#fclosed"/></svg><span>Applications</span></div>
          </div>
        </section>
        <aside class="side"><div class="side-top">«</div><div class="side-dots">- - -</div><svg class="ic" width="14" height="14" viewBox="0 0 14 14"><path d="M2 12l1-4 7-7 2 2-7 7z"/></svg></aside>
      </div>
      <footer class="status">
        <svg class="status-bg" width="1298" height="44" viewBox="0 0 1298 44"><path d="M0 44V.5h50l8 9h1182l9-9h49V44z"/></svg>
        <div class="status-row">
          <span class="bellbox"><svg width="10" height="6" viewBox="0 0 10 6"><path d="M1 5l4-4 4 4"/></svg><svg width="18" height="18" viewBox="0 0 18 18"><path d="M1.500 13.500Q4 11 4 7t5-5q5 1 5 5t2.500 6.500zM9 2V.5M7 14q2 4 4 0" stroke-width="1.400"/></svg></span>
          <span class="badge">14</span><hr><span class="msg">Odstup kolmé kóty</span><span class="mode">Dist-Axs</span><hr class="r">
          <span class="zero"><svg width="10" height="6" viewBox="0 0 10 6"><path d="M1 5l4-4 4 4"/></svg><span class="badge">0</span></span>
        </div>
      </footer>
    </main>
  </div>

  <div class="taskbar">
    <div class="start"><svg width="17" height="17" viewBox="0 0 17 17"><path d="M0 2.400L7.500 1.300V8H0zM8.500 1.200L17 0v8H8.500zM0 9h7.500v6.700L0 14.600zM8.500 9H17v8l-8.500-1.200z" fill="#fff"/></svg></div>
    <div class="search"><svg width="18" height="18" viewBox="0 0 18 18"><circle cx="11" cy="6.500" r="5.500"/><path d="M7 10.500L1 17"/></svg><span>Hľadať</span></div>
    <div class="tasks">
      <span><svg width="18" height="18" viewBox="0 0 18 18" fill="none" stroke="#fff" stroke-width="1.200"><path d="M1.500 1v3h9V1M1.500 17v-3h9v3M1.500 6h9v6h-9zM15 1v16"/><path d="M14.500 5h1.500v4h-1.500z" fill="#fff"/></svg></span>
      <span class="run"><svg width="24" height="24" viewBox="0 0 24 24"><path d="M1 2h8l2 2h12v17H1z" fill="#e2a72e"/><path d="M1 6h22v15H1z" fill="#fbd36a"/><path d="M5 21v-6q0-3 3-3h8q3 0 3 3v6h-4v-4H9v4z" fill="#3a92d4"/></svg></span>
      <span><svg width="24" height="24" viewBox="0 0 24 24"><path d="M12 6h11v12H12z" fill="#e9f3fb"/><path d="M12 7l5.500 5L23 7" stroke="#0f6cbd" fill="none" stroke-width="2"/><path d="M1 3l13-3v24L1 21z" fill="#0f6cbd"/><text x="3" y="16" font-size="12" textLength="9">O</text></svg></span>
      <span><svg width="24" height="24" viewBox="0 0 24 24"><path d="M4 1h12l4 4v18H4z" fill="#f6f6f6"/><path d="M16 1v4h4z" fill="#999"/></svg></span>
      <span><svg width="25" height="25" viewBox="0 0 24 24"><circle cx="12" cy="12" r="12" fill="url(#edge)"/><path d="M0 11Q1 0 13 0q11 2 11 11-1 6-9 6-3-1-2-4-1-5-6-4-4 0-7 2z" fill="#36c3c0"/><path d="M15 2q9 2 9 10-2 5-9 5-3-1-2-4l3-5z" fill="#67d66a" opacity=".8"/><path d="M9 12q-2 9 8 10 4-1 6-5-10 4-14-5z" fill="#10407d"/></svg></span>
      <span><svg width="24" height="24" viewBox="0 0 24 24"><path d="M13 4h9v16h-9z" fill="#fff"/><path d="M14 7q4 2 8 0M14 11.500q4 2 8 0M14 16q4 2 8 0" stroke="#a4373a" fill="none" stroke-width="1.500"/><path d="M1 2l12-2v24L1 22z" fill="#a4373a"/><text x="3" y="16.500" font-size="12">A</text></svg></span>
      <span><svg width="24" height="24" viewBox="0 0 24 24"><path d="M13 3h10v18H13z" fill="#fff"/><path d="M14 6h7M14 9h7M14 12h7M14 15h7M14 18h7" stroke="#2b579a"/><path d="M1 2l13-2v24L1 22z" fill="#2b579a"/><text x="2.500" y="16.500" font-size="11">W</text></svg></span>
      <span class="run active"><svg width="24" height="24" viewBox="0 0 24 24"><path d="M13 3h10v18H13z" fill="#fff"/><path d="M14 6h8M14 9h8M14 12h8M14 15h8M14 18h8M18 4v16" stroke="#217346"/><path d="M1 2l13-2v24L1 22z" fill="#217346"/><text x="3.500" y="16.500" font-size="12">X</text></svg></span>
      <span><svg width="24" height="24" viewBox="0 0 24 24"><path d="M13 3h10v18H13z" fill="#fff"/><circle cx="17.500" cy="9" r="3.500" fill="#d24726"/><path d="M14 15h7M14 18h7" stroke="#d24726" stroke-width="1.500"/><path d="M1 2l13-2v24L1 22z" fill="#d24726"/><text x="3.500" y="16.500" font-size="12">P</text></svg></span>
      <span><svg width="24" height="24" viewBox="0 0 24 24"><path d="M5 2.500q11-4 14 4 1 9-8 11" stroke="#d1451f" stroke-width="4" fill="none"/><path d="M8 1l5 17M15 6l-7 11" stroke="#ddd" stroke-width="2.500"/><circle cx="5" cy="18" r="3" fill="none" stroke="#2196e3" stroke-width="2"/><circle cx="13" cy="21" r="2.300" fill="none" stroke="#2196e3" stroke-width="2"/></svg></span>
      <span><svg width="24" height="24" viewBox="0 0 24 24"><path d="M3 0h18v24H3z" fill="#7f8d99"/><path d="M5 2h14v4H5z" fill="#5cd0f2"/><path d="M5 9h4v4H5zM10 9h4v4h-4zM15 9h4v4h-4zM5 14h4v4H5zM10 14h4v4h-4zM5 19h4v4H5zM10 19h4v4h-4z" fill="#e6eaee"/><path d="M15 14h4v9h-4z" fill="#1e3f66"/></svg></span>
      <span class="run"><svg width="24" height="24" viewBox="0 0 24 24"><circle cx="12" cy="12" r="12" fill="#1a94e0"/><g fill="none" stroke="#fff" stroke-width="1.700"><circle cx="12" cy="12" r="3.800"/><circle cx="5" cy="12" r="2.200"/><circle cx="19" cy="12" r="2.200"/></g></svg></span>
      <span class="run"><svg width="24" height="24" viewBox="0 0 24 24"><path d="M1 2h22v20H1z" fill="#000" stroke="#8f9aa3"/><path d="M1.500 2h21v2h-21z" fill="#cfd4d8"/><text x="3" y="11" font-size="6" textLength="16">C:\_</text></svg></span>
      <span class="run"><svg width="23" height="23"><use href="#tebis"/></svg></span>
    </div>
    <div class="tray">
      <svg width="12" height="8" viewBox="0 0 12 8"><path d="M1 7l5-5.500L11 7"/></svg>
      <svg width="18" height="16" viewBox="0 0 18 16"><path d="M6 3h11v8H4V7M8 14h6M11 11v3M1 1.500h4v3.500H1zM3 5v9h3"/></svg>
      <svg width="18" height="16" viewBox="0 0 18 16"><path d="M1 6h3l4-4v12l-4-4H1zM10.500 5.500q2 2.500 0 5M13 3.500q3 4.500 0 9"/><path d="M15.500 2q4 6 0 12" opacity=".4"/></svg>
      <span class="lang">SLK</span>
      <div class="clock"><span>10:56</span><span>22. 1. 2025</span></div>
      <svg width="17" height="17" viewBox="0 0 17 17"><path d="M1 1.500h15v11h-4.500l-3 3.500-3-3.500H1z"/></svg>
    </div>
  </div>

  <section class="param">
    <header><svg width="15" height="15"><use href="#tebis"/></svg><b>Parametr</b><span class="q">?</span><svg width="10" height="10" viewBox="0 0 10 10" stroke="#fff" stroke-width="1.700"><path d="M1 1l8 8M9 1L1 9"/></svg></header>
    <div class="cmd"><div class="cmd-h"><svg class="ic" width="25" height="25"><use href="#dist"/></svg><b>Dist-Axs</b><svg class="ic" width="10" height="12" viewBox="0 0 10 12"><path d="M1 5.500L5 1.500l4 4M1 11l4-4 4 4"/></svg></div><div class="desc">Odstup kolmé kóty</div></div>
    <div class="pf"><span>Prvky</span><i>E,E,</i><span>Poloha X</span><i class="focus"></i><span>Poloha Y</span><i></i><span>Poloha Z</span><i></i></div>
    <footer><button class="apply">Použít</button><button>Vynulovat</button></footer>
  </section>

  <section class="dialog">
    <header><span>Pozícia tlačných čapov</span><svg width="11" height="11" viewBox="0 0 11 11" stroke="#bbb" fill="none"><path d="M.5.5l10 10M10.500.5l-10 10"/></svg></header>
    <div class="ask"><svg width="32" height="32" viewBox="0 0 32 32"><circle cx="16" cy="16" r="15.500" fill="#ddd" stroke="#999"/><circle cx="16" cy="16" r="14" fill="url(#ask)"/><text x="16" y="25" text-anchor="middle" font-size="25" font-weight="700" fill="#fff">?</text></svg><span>Prajete si vyznačiť pozíciu tlačných čapov?</span></div>
    <footer><button class="def">Áno</button><button>Nie</button></footer>
  </section>
</div>
</body>
</html>
```
FILE: styles.css
```css
* { box-sizing: border-box; }
body { margin: 0; background: #020910; font-family: Roboto, sans-serif; overflow: hidden; }
i, em { font-style: normal; }
hr { margin: 0; border: 0; }
button { font: inherit; padding: 0; border-radius: 0; }
.defs { position: absolute; }
.desktop { position: relative; width: 1600px; height: 1200px; display: flex; flex-direction: column; }
.windows { display: flex; height: 1160px; }

/* tool form */
.form { width: 302px; background: #404040; border-right: 3px solid #2c2c2e; display: flex; flex-direction: column; }
.form-title { height: 31px; border-top: 1px solid #24262b; background: #fff; display: flex; align-items: center; justify-content: space-between; padding: 0 9px; font: 12px "Open Sans", sans-serif; letter-spacing: -.28px; color: #8d8d8d; }
.form-title svg { stroke: #888; fill: none; }
.form-title span { margin-top: -1px; }
.form-body { padding: 8px 7px 0 9px; }
.logo { border: 1px solid #6b6b6b; width: 283px; height: 72px; }
.logo svg { display: block; }
.brand { fill: #d3ef4c; font-size: 25px; }
.sub { fill: #fff; font-size: 12.5px; }
.rows { display: grid; grid-auto-rows: 32px; width: 283px; }
.ident { margin-top: 8px; }
.dims { margin-top: 24px; }
.row { display: flex; justify-content: space-between; align-items: flex-start; }
.lb { color: #f2f2f2; font-size: 15px; line-height: 20px; white-space: nowrap; display: inline-block; transform: scaleX(.88); transform-origin: left; }
.row .lb { width: 0; }
.field { flex: none; width: 184px; height: 27px; background: #c0c0c0; border: 2px solid; border-color: #9a9a9a #fff #fff #9a9a9a; box-shadow: inset 1px 1px #5c5c5c; font-weight: 700; font-size: 14px; line-height: 24px; padding-left: 10px; color: #000; white-space: nowrap; letter-spacing: -.32px; }
.field.line { border-bottom: 1px solid #fff; box-shadow: inset 1px 1px #5c5c5c, inset 0 -2px #444, inset 0 -3px #bbb; }
.dims .field { width: 54px; }
.ck { display: block; width: 13px; height: 13px; background: #fff; border: 1.500px solid; border-color: #909090 #fff #fff #909090; box-shadow: inset -1px -1px #d8d8d8; }
.ck.on::after { content: ""; display: block; width: 7px; height: 4px; margin: 1.500px 0 0 1.500px; border: solid #000; border-width: 0 0 2px 2px; transform: rotate(-48deg); }
.stroke-grid { display: grid; grid-template-columns: 105px 23px 20px 20px 0; align-items: center; height: 20px; }
.hold { display: grid; grid-template-columns: 122px 23px 34px 30px 29px 27px 13px; align-items: center; height: 20px; width: 283px; }
.press { display: flex; flex-direction: column; height: 64px; }
.press > .lb { margin: 0 0 3px 30px; }
.press-opts { display: grid; grid-template-columns: 12px 44px 12px 52px 12px 44px 12px 13px; align-items: center; padding-left: 37px; }
.pins { margin-top: 0; }
.center-box { position: relative; width: 280px; height: 192px; border: 1px solid #6b6b6b; margin-top: 8px; }
.center-box svg { display: block; }
.center-box i { position: absolute; }
.arrows { fill: none; stroke: #000; stroke-width: 1.200; }
.lbt { fill: #f2f2f2; font-size: 15px; }
.lbt .tiny { font-size: 11.500px; }
.nb { width: 29px; height: 27px; background: #c0c0c0; border: 2px solid; border-color: #8a8a8a #fff #fff #8a8a8a; }
.nb.w { width: 40px; }
.notes { position: relative; width: 280px; height: 169px; margin-top: 15px; border: 2px solid; border-color: #9a9a9a #fff #fff #9a9a9a; display: flex; }
.legend { position: absolute; top: -8px; left: 7px; background: #404040; padding: 0 5px; color: #f2f2f2; font-size: 11px; line-height: 14px; letter-spacing: -.75px; white-space: nowrap; }
.note-list { flex: 1; padding-top: 8px; overflow: hidden; }
.note { display: flex; height: 32px; align-items: stretch; }
.note b { width: 20px; font-weight: 400; font-size: 11px; color: #eee; padding: 17px 0 0 7px; }
.note i { flex: 1; background: #c0c0c0; border: 1px solid #888; border-width: 2px 1px 1px 2px; border-bottom: 2px solid #fff; }
.sb { width: 17px; background: #f6f6f6; display: flex; flex-direction: column; }
.sb-btn { height: 17px; background: #f0f0f0; border: 1px solid; border-color: #fff #707070 #707070 #fff; display: grid; place-items: center; }
.sb-thumb { height: 54px; background: #f0f0f0; border: 1px solid; border-color: #fff #707070 #707070 #ddd; box-shadow: inset -1px -1px #aaa; }
.sb-space { flex: 1; }
.form-foot { display: flex; justify-content: space-between; width: 280px; margin-top: 8px; }
.form-foot button { height: 32px; background: #404040; border: 2px solid; border-color: #f4f4f4 #a0a0a0 #a0a0a0 #f4f4f4; color: #fff; font-weight: 700; font-size: 14px; letter-spacing: -.3px; display: grid; place-items: center; }
.form-foot .sq { width: 32px; }
.form-foot .close-form { width: 152px; margin-left: 1px; }

/* main application */
.app { width: 1298px; display: flex; flex-direction: column; }
.app-title { height: 31px; background: #fff; border-top: 1px solid #24262b; display: flex; align-items: center; padding: 0 15px 0 8px; gap: 5px; font: 12px "Open Sans", sans-serif; letter-spacing: -.52px; color: #000; }
.winbtns { margin-left: auto; fill: none; stroke: #000; stroke-width: 1.200; }
.menubar { height: 27px; background: #262a33; display: flex; align-items: center; border-bottom: 1px solid #2a7bd0; padding-left: 6px; }
.menus { display: flex; gap: 10.400px; margin-left: 10px; width: 469px; font-size: 15px; letter-spacing: -.3px; color: #9da1a8; padding-bottom: 3px; }
.tab { align-self: flex-end; width: 429px; height: 23px; margin-bottom: -1px; border: 1px solid #2a7bd0; border-bottom: 0; background: #262c35; display: flex; align-items: center; padding: 1px 0 0 5px; font-size: 14.500px; color: #e8eaec; white-space: nowrap; }
.tabname { letter-spacing: .2px; }
.mb { color: #b3b6bb; letter-spacing: -.6px; }
.badge { background: #05080b; border-radius: 8px; color: #fff; height: 19px; width: 25px; line-height: 19px; text-align: center; font-size: 14.500px; }
.tab .badge { margin: 0 11px 0 9px; }
.layout-sel { margin-left: auto; margin-right: 9px; width: 85px; height: 23px; border: 1px solid #39414d; display: flex; align-items: center; justify-content: center; gap: 5px; font-size: 15px; color: #9da1a8; letter-spacing: 0; }
.ic { width: 24px; height: 24px; fill: none; stroke: #f4f6f8; stroke-width: 1.300; color: #fff; overflow: visible; }
.ic.small { width: 9px; height: 10px; stroke: #a7abb0; }
.ic text { fill: #fff; stroke: none; }
.solid { fill: #fff; stroke: none; }
.tools { display: flex; align-items: center; background: linear-gradient(#2a313b, #222831); }
.tools > span { display: grid; place-items: center; flex: none; }
.t1 { height: 35px; padding-left: 2px; border-bottom: 1px solid #39414c; }
.t1 > span { width: 35px; height: 29px; }
.t1 hr { width: 2px; height: 31px; margin: 0 7.500px; background: #11161d; border-right: 1px solid #36475a; flex: none; }
.t1 em { width: 12.500px; display: grid; place-items: center; }
.t1 em.wide { width: 14.500px; }
.tools .on { background: #147cf8; background-clip: content-box; padding: 0 3px; }
.t2 { height: 39px; border-bottom: 1px solid #39444e; margin-right: 31px; }
.t2 > span { width: 34px; height: 31px; }
.t2 .on { padding: 0 2px; }
.t2 .grip { width: 182px; height: 27px; }
.t2 .grip::before { content: ""; display: block; width: 2px; height: 27px; margin-left: 3px; background: repeating-linear-gradient(#69717c 0 2px, transparent 2px 6px); }
.work { flex: 1; display: flex; position: relative; }
.viewport { position: relative; width: 1267px; background: #020910; }
.scene { position: absolute; left: 0; top: 0; }
.model { stroke: #262019; stroke-width: 1; overflow: hidden; }
.model path, .model ellipse, .model circle, .model rect { vector-effect: non-scaling-stroke; }
.model text { stroke: none; }
.hole { fill: #9a8a74; }
.hole.in { fill: #ab8a88; }
.tri-g { fill: none; stroke: #23d636; stroke-width: 1.300; }
.tri-g text { fill: #23d636; stroke: none; font: 14px "Liberation Mono", monospace; }
.tri-r { fill: none; stroke: #e4501e; stroke-width: 1.300; }
.tri-r text { fill: #e4501e; stroke: none; font: 14px "Liberation Mono", monospace; }
.tree { position: relative; padding: 20px 0 0 17px; color: #9b9fa4; font-size: 15px; letter-spacing: -.11px; }
.node { display: flex; align-items: center; height: 21px; white-space: nowrap; }
.node svg { fill: #aeb1b5; color: #aeb1b5; flex: none; }
.node.hi { color: #f4f6f8; }
.node.hi svg { fill: #1480f8; color: #1480f8; }
.l1 { padding-left: 21px; } .l2 { padding-left: 42px; } .l3 { padding-left: 63px; } .l4 { padding-left: 84px; }
.tw { width: 16px; height: 16px; display: grid; place-items: center; flex: none; }
.tw::before { width: 7px; height: 7px; border: solid #b4b7bb; border-width: 0 2px 2px 0; }
.tw.o::before { content: ""; transform: translateY(-1px) rotate(45deg); }
.tw.c::before { content: ""; transform: translateX(-1px) rotate(-45deg); }
.fo { width: 18px; height: 14px; margin: -3px 2.500px 0 4px; }
.dc { width: 16px; height: 18px; margin: 0 4px 0 4.500px; }
.cur span { line-height: 17px; border-bottom: 1px solid #f06022; }
.side { width: 31px; margin-top: -38px; background: linear-gradient(90deg, #2d3540, #262c35); border-left: 1px solid #3c4650; display: flex; flex-direction: column; color: #9ea3aa; }
.side-top { height: 18px; background: #1d2229; padding-left: 2px; font-size: 18px; line-height: 14px; }
.side-dots { font-size: 8px; padding-left: 8px; line-height: 8px; }
.side .ic { width: 14px; height: 14px; margin-left: 8px; stroke: #9ea3aa; }
.status { position: relative; height: 34px; color: #e8eaec; font-size: 15px; }
.status-bg { position: absolute; left: 0; bottom: 0; fill: #262a33; stroke: #434b55; }
.status-row { position: relative; height: 34px; display: flex; align-items: center; }
.status-row svg { fill: none; stroke: #fff; display: block; }
.bellbox { width: 48px; display: grid; justify-items: center; gap: 8px; margin-top: -15px; }
.status-row hr { width: 2px; height: 27px; background: #0a0d11; border-right: 1px solid #444c57; margin-left: 13px; }
.status-row .msg { margin: 3px 0 0 16px; letter-spacing: -.36px; }
.mode { margin: 3px 5px 0 auto; letter-spacing: -.15px; }
.status-row .zero { width: 52px; margin-left: 199px; display: grid; justify-items: center; gap: 7px; margin-top: -14px; }

/* floating parameter panel */
.param { position: absolute; left: 1379px; top: 132px; width: 221px; height: 283px; border: 1px solid #39434f; background: #3e4a58; color: #eef0f2; font-size: 14.500px; display: flex; flex-direction: column; }
.param header { height: 26px; background: #20262e; border-bottom: 1px solid #2a7bd0; display: flex; align-items: center; padding: 0 8px 0 7px; gap: 4px; font-size: 13px; }
.param b { font-weight: 500; letter-spacing: .5px; }
.param .q { margin-left: auto; margin-right: 12px; font-weight: 700; font-size: 14px; }
.cmd { height: 73px; background: #3e4a57; padding: 9px 13px 0 11px; }
.cmd-h { display: flex; align-items: center; height: 24px; gap: 9px; font-size: 15px; }
.cmd-h .ic:last-child { width: 10px; height: 12px; margin-left: auto; margin-bottom: 4px; }
.desc { margin: 13px 0 0 -1px; font-size: 14.500px; letter-spacing: -.2px; }
.pf { height: 139px; background: #526071; display: grid; grid-template-columns: 71px 127px; gap: 3px 5px; grid-auto-rows: 24px; padding-top: 10px; text-align: right; line-height: 26px; }
.pf i { border: 1px solid #35404c; background: #485562; text-align: left; padding-left: 4px; line-height: 24px; letter-spacing: -.3px; }
.pf .focus { background: #f3faff; border: 1px solid #147cf8; border-left-width: 3px; padding: 2px; }
.pf .focus::before { content: ""; display: block; width: 1px; height: 18px; background: #000; }
.param footer { flex: 1; background: #3a4450; border-top: 1px solid #2b343e; display: flex; justify-content: space-between; padding: 10px 11px 0 10px; }
.param button { height: 24px; width: 86px; border: 1px solid #2c3540; background: #526071; color: #eef0f2; }
.param .apply { width: 64px; background: #147cf8; }

/* message box */
.dialog { position: absolute; left: 654px; top: 531px; width: 306px; height: 151px; background: #fff; border: 1px solid #777; box-shadow: 0 2px 10px rgba(0,0,0,.5); font: 12px "Open Sans", sans-serif; letter-spacing: -.28px; color: #000; display: flex; flex-direction: column; }
.dialog header { height: 30px; display: flex; justify-content: space-between; align-items: center; padding: 0 9px 0 8px; letter-spacing: -.2px; }
.ask { height: 78px; display: flex; align-items: center; padding: 2px 0 0 21px; gap: 9px; white-space: nowrap; letter-spacing: -.44px; }
.dialog footer { flex: 1; background: #f0f0f0; display: flex; gap: 8px; justify-content: flex-end; padding: 10px 14px; }
.dialog button { width: 77px; height: 24px; background: #f0f0f0; border: 1px solid; border-color: #fff #6a6a6a #6a6a6a #fff; box-shadow: inset -1px -1px #a8a8a8; color: #000; }
.dialog .def { border-color: #555; box-shadow: inset 1px 1px #fff, inset -1px -1px #888; }

/* taskbar */
.taskbar { height: 40px; background: linear-gradient(90deg, #20383d, #1f3440 40%, #1d2c42 85%, #1b2742); display: flex; color: #fff; }
.start { width: 48px; display: grid; place-items: center; }
.search { width: 288px; background: #333; border: 1px solid #5a5a5a; display: flex; align-items: center; gap: 10px; padding-left: 11px; color: #c8c8c8; font: 15.500px "Open Sans", sans-serif; letter-spacing: -.2px; }
.search svg { fill: none; stroke: #ddd; stroke-width: 1.300; }
.tasks { display: flex; }
.tasks span { width: 49.150px; height: 40px; display: grid; place-items: center; }
.tasks text { fill: #fff; font-weight: 700; }
.tasks .run { background: linear-gradient(#5c96cc, #5c96cc) center bottom / 40px 3px no-repeat; }
.tasks .active { background: linear-gradient(#5c96cc, #5c96cc) center bottom / 100% 3px no-repeat, #4b5d66; }
.tray { margin-left: auto; display: flex; align-items: center; padding-right: 24px; font: 12px "Open Sans", sans-serif; letter-spacing: -.4px; }
.tray svg { fill: none; stroke: #fff; stroke-width: 1.200; margin-right: 9px; }
.tray svg:last-child { margin: 0; }
.lang { margin: 0 15px 0 -1px; letter-spacing: -.2px; }
.clock { width: 56px; display: grid; text-align: center; line-height: 18px; margin-right: 18px; white-space: nowrap; }
```
